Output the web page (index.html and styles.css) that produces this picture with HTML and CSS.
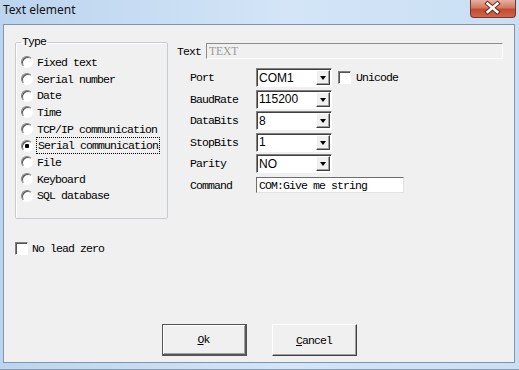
FILE: index.html
```html
<!DOCTYPE html>
<html>
<head>
  <meta charset="utf-8"/>
  <title>Text element</title>
  <link rel="stylesheet" href="styles.css">
</head>
<body>

<div class="window">
  <div class="titlebar">
    <span class="title">Text element</span>
    <button class="close" type="button" aria-label="Close">
      <svg width="46" height="18" viewBox="0 0 46 18">
        <path d="M18 4.5 L28 13 M28 4.5 L18 13" stroke="#6b2418" stroke-width="4.6" stroke-linecap="square"/>
        <path d="M18 4.5 L28 13 M28 4.5 L18 13" stroke="#fff" stroke-width="2.6" stroke-linecap="square"/>
      </svg>
    </button>
  </div>

  <form class="client">
    <div class="top">
      <fieldset class="group">
        <legend>Type</legend>
        <label class="opt"><input type="radio" name="type"/>Fixed text</label>
        <label class="opt"><input type="radio" name="type"/>Serial number</label>
        <label class="opt"><input type="radio" name="type"/>Date</label>
        <label class="opt"><input type="radio" name="type"/>Time</label>
        <label class="opt"><input type="radio" name="type"/>TCP/IP communication</label>
        <label class="opt"><input type="radio" name="type" checked/><span class="focus">Serial communication</span></label>
        <label class="opt"><input type="radio" name="type"/>File</label>
        <label class="opt"><input type="radio" name="type"/>Keyboard</label>
        <label class="opt"><input type="radio" name="type"/>SQL database</label>
      </fieldset>

      <div class="props">
        <div class="text-row">
          <span>Text</span>
          <input class="edit" type="text" value="TEXT" disabled/>
        </div>
        <div class="fields">
          <span>Port</span>
          <span class="combo"><select><option>COM1</option></select><i class="drop"></i></span>
          <label class="check"><input type="checkbox"/>Unicode</label>

          <span>BaudRate</span>
          <span class="combo"><select><option>115200</option></select><i class="drop"></i></span>
          <span></span>

          <span>DataBits</span>
          <span class="combo"><select><option>8</option></select><i class="drop"></i></span>
          <span></span>

          <span>StopBits</span>
          <span class="combo"><select><option>1</option></select><i class="drop"></i></span>
          <span></span>

          <span>Parity</span>
          <span class="combo"><select><option>NO</option></select><i class="drop"></i></span>
          <span></span>

          <span>Command</span>
          <input class="edit command" type="text" value="COM:Give me string"/>
        </div>
      </div>
    </div>

    <label class="check lead"><input type="checkbox"/>No lead zero</label>

    <div class="buttons">
      <button type="submit" class="btn default"><u>O</u>k</button>
      <button type="reset" class="btn"><u>C</u>ancel</button>
    </div>
  </form>
</div>

</body>
</html>
```

FILE: styles.css
```css
body {
  margin: 0;
  background-color: #c8ddf3;
  font-family: "Liberation Mono", monospace;
  font-size: 11.5px;
  letter-spacing: -0.9px;
  color: #000;
}
.window {
  width: 519px;
  height: 370px;
  display: flex;
  flex-direction: column;
  background: linear-gradient(to right, #bcd4ee, #d3e5f7 55%, #cadff4);
  box-shadow: inset 0 -1px #8a9cb0;
}
.titlebar {
  height: 24px;
  display: flex;
  align-items: flex-start;
  justify-content: space-between;
}
.title {
  font-family: "Noto Sans", sans-serif;
  font-size: 12px;
  letter-spacing: 0;
  line-height: 20px;
  margin-left: 3px;
  color: #111;
}
.close {
  width: 46px;
  height: 18px;
  margin-right: 3px;
  padding: 0;
  border: 1px solid #7c3426;
  border-top: 0;
  border-radius: 0 0 4px 4px;
  background: linear-gradient(#e6b0a0, #d27a62 45%, #c24a31 55%, #cf664c);
  display: flex;
}
.close svg {
  margin: -1px 0 0 -1px;
}

.client {
  flex: 1;
  margin: 0 4px 7px 3px;
  border: 1px solid #7d95ad;
  background-color: #f0f0f0;
  display: flex;
  flex-direction: column;
}
.top {
  display: flex;
  align-items: flex-start;
}

.group {
  box-sizing: border-box;
  width: 153px;
  height: 184px;
  margin: 10px 0 0 11px;
  padding: 0 0 0 5px;
  border: 1px solid #c5ccd3;
  border-radius: 2px;
  box-shadow: inset 1px 1px #fff;
  min-width: 0;
}
.group legend {
  padding: 0 1px;
  line-height: 14px;
}
.opt {
  display: flex;
  align-items: center;
  height: 16.7px;
  white-space: nowrap;
}
.opt:first-of-type {
  margin-top: 5px;
}
.opt input {
  appearance: none;
  width: 12px;
  height: 12px;
  margin: 0 4px 0 0;
  border-radius: 50%;
  border: 1px solid;
  border-color: #808080 #fff #fff #808080;
  box-shadow: inset 1px 1px #555;
  background: #fff;
}
.opt input:checked {
  background: radial-gradient(circle, #000 2px, #fff 2.5px);
}
.focus {
  outline: 1px dotted #000;
  outline-offset: 1px;
  margin-left: 1px;
}

.props {
  flex: 1;
  margin: 18px 11px 0 9px;
}
.text-row {
  display: flex;
  align-items: center;
  gap: 5px;
}
.edit {
  box-sizing: border-box;
  height: 16px;
  padding: 0 2px;
  border: 1px solid;
  border-color: #6d6d6d #e3e3e3 #e3e3e3 #6d6d6d;
  background: #fff;
  font: inherit;
  letter-spacing: inherit;
  color: #000;
}
.text-row .edit {
  flex: 1;
  min-width: 0;
  background: #f0f0f0;
  border-color: #8c8c8c #fafafa #fafafa #8c8c8c;
  color: #9a9a9a;
  font-family: "Liberation Serif", serif;
  letter-spacing: 0;
}
.fields {
  display: grid;
  grid-template-columns: 66px 76px auto;
  grid-auto-rows: 21.5px;
  align-items: center;
  margin: 8px 0 0 13px;
}
.combo {
  position: relative;
  height: 19px;
  display: block;
}
.combo select {
  appearance: none;
  box-sizing: border-box;
  width: 100%;
  height: 100%;
  margin: 0;
  padding: 0 0 0 2px;
  border: 1px solid;
  border-color: #808080 #fff #fff #808080;
  box-shadow: inset 1px 1px #404040;
  background: #fff;
  font-family: "Liberation Sans", sans-serif;
  font-size: 12px;
  letter-spacing: 0;
  color: #000;
}
.drop {
  position: absolute;
  top: 2px;
  right: 2px;
  width: 14px;
  height: 15px;
  box-sizing: border-box;
  border: 1px solid;
  border-color: #fff #404040 #404040 #fff;
  box-shadow: inset -1px -1px #a0a0a0;
  background: #f0f0f0;
}
.drop::after {
  content: "";
  position: absolute;
  left: 3px;
  top: 5px;
  border: 3.5px solid transparent;
  border-top: 4px solid #000;
}
.command {
  grid-column: 2 / 4;
  width: 148px;
}

.check {
  display: flex;
  align-items: center;
  gap: 5px;
  margin-left: 6px;
}
.check input {
  appearance: none;
  width: 13px;
  height: 13px;
  margin: 0;
  border: 1px solid;
  border-color: #808080 #fff #fff #808080;
  box-shadow: inset 1px 1px #555;
  background: #fff;
}
.lead {
  margin: 23px 0 0 11px;
  gap: 4px;
}

.buttons {
  margin-top: auto;
  padding-bottom: 6px;
  display: flex;
  justify-content: center;
  gap: 25px;
}
.btn {
  width: 85px;
  height: 32px;
  border: 1px solid;
  border-color: #fff #404040 #404040 #fff;
  box-shadow: inset -1px -1px #a0a0a0;
  background: #f0f0f0;
  font: inherit;
  letter-spacing: inherit;
  color: #000;
}
.btn.default {
  border-color: #555;
  border-width: 1px 2px 2px 1px;
  box-shadow: inset 1px 1px #fff, inset -1px -1px #a0a0a0;
}
```
